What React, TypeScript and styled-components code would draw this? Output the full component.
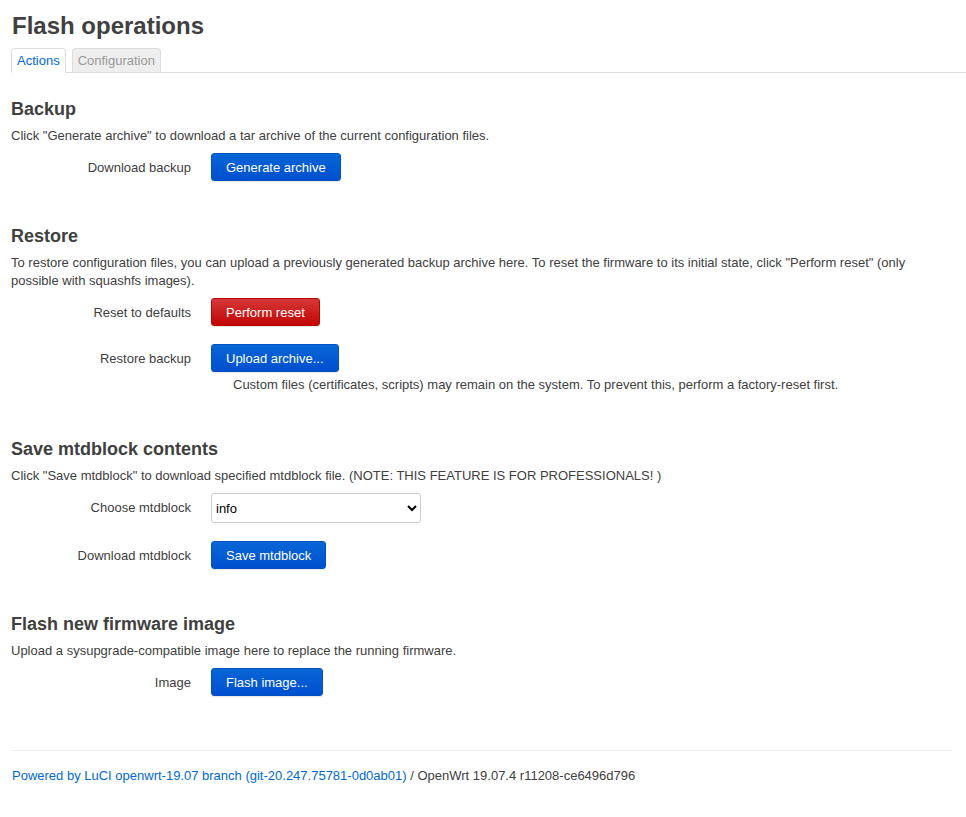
import React from "react";
import styled, { createGlobalStyle } from "styled-components";

const Global = createGlobalStyle`
  html, body { margin: 0; padding: 0; background: #fff; }
  body {
    font-family: "Liberation Sans", Arial, sans-serif;
    font-size: 13px;
    line-height: 18px;
    color: #404040;
  }
`;

const Page = styled.div`
  padding: 0 15px 0 11px;
`;

const Title = styled.h2`
  margin: 0;
  padding-top: 8px;
  font-size: 24px;
  line-height: 36px;
  font-weight: bold;
  color: #404040;
  padding-left: 1px;
`;

const Tabs = styled.ul`
  display: flex;
  list-style: none;
  margin: 4px -15px 0 0;
  padding: 0;
  border-bottom: 1px solid #ddd;
  height: 24px;
  gap: 6px;
`;

const Tab = styled.li<{ $active?: boolean }>`
  box-sizing: border-box;
  height: ${(p) => (p.$active ? "25px" : "24px")};
  padding: 0 5px;
  line-height: 24px;
  font-size: 13px;
  border: 1px solid #ddd;
  border-bottom: ${(p) => (p.$active ? "1px solid #fff" : "none")};
  border-radius: 4px 4px 0 0;
  background: ${(p) => (p.$active ? "#fff" : "#eee")};
  color: ${(p) => (p.$active ? "#0069d6" : "#999")};
`;

const Section = styled.section`
  margin-top: 25px;
  & + & { margin-top: 44px; }
`;

const SectionTitle = styled.h3`
  margin: 0;
  font-size: 18px;
  line-height: 22px;
  font-weight: bold;
  color: #404040;
`;

const Desc = styled.p`
  margin: 7px 0 0;
  font-size: 13px;
  line-height: 18px;
`;

const Rows = styled.div`
  display: flex;
  flex-direction: column;
  gap: 18px;
  margin-top: 8px;
`;

const Row = styled.div`
  display: grid;
  grid-template-columns: 180px 1fr;
  column-gap: 20px;
  align-items: start;
`;

const Label = styled.div`
  text-align: right;
  padding-top: 6px;
  font-size: 13px;
  line-height: 18px;
`;

const Field = styled.div`
  display: flex;
  flex-direction: column;
  align-items: flex-start;
`;

const Button = styled.button<{ $variant?: "action" | "reset" }>`
  box-sizing: border-box;
  height: 28px;
  padding: 0 14px;
  border-radius: 3px;
  font-family: "Liberation Sans", Arial, sans-serif;
  font-size: 13px;
  color: #fff;
  cursor: pointer;
  border: 1px solid ${(p) => (p.$variant === "reset" ? "#b00" : "#0052c4")};
  background: ${(p) =>
    p.$variant === "reset"
      ? "linear-gradient(#d43838, #c20606)"
      : "linear-gradient(#0866d6, #004fcf)"};
  box-shadow: 0 1px 1px rgba(0, 0, 0, 0.1);
`;

const Help = styled.div`
  margin-top: 4px;
  padding-left: 22px;
  font-size: 13px;
  line-height: 18px;
`;

const Select = styled.select`
  box-sizing: border-box;
  width: 210px;
  height: 30px;
  font-family: "Liberation Sans", Arial, sans-serif;
  font-size: 13px;
  color: #000;
  border: 1px solid #ccc;
  border-radius: 3px;
  background: #fff;
  padding: 0;
`;

const Footer = styled.footer`
  margin-top: 54px;
  border-top: 1px solid #eee;
  padding-top: 16px;
  padding-bottom: 30px;
  font-size: 13px;
  line-height: 18px;
  padding-left: 1px;
`;

const Link = styled.a`
  color: #0069d6;
  text-decoration: none;
`;

export default function App() {
  return (
    <>
      <Global />
      <Page>
        <Title>Flash operations</Title>
        <Tabs>
          <Tab $active>Actions</Tab>
          <Tab>Configuration</Tab>
        </Tabs>

        <Section>
          <SectionTitle>Backup</SectionTitle>
          <Desc>Click "Generate archive" to download a tar archive of the current configuration files.</Desc>
          <Rows>
            <Row>
              <Label>Download backup</Label>
              <Field>
                <Button>Generate archive</Button>
              </Field>
            </Row>
          </Rows>
        </Section>

        <Section>
          <SectionTitle>Restore</SectionTitle>
          <Desc>
            To restore configuration files, you can upload a previously generated backup archive here. To reset the firmware to its initial state, click "Perform reset" (only possible with squashfs images).
          </Desc>
          <Rows>
            <Row>
              <Label>Reset to defaults</Label>
              <Field>
                <Button $variant="reset">Perform reset</Button>
              </Field>
            </Row>
            <Row>
              <Label>Restore backup</Label>
              <Field>
                <Button>Upload archive...</Button>
                <Help>Custom files (certificates, scripts) may remain on the system. To prevent this, perform a factory-reset first.</Help>
              </Field>
            </Row>
          </Rows>
        </Section>

        <Section>
          <SectionTitle>Save mtdblock contents</SectionTitle>
          <Desc>Click "Save mtdblock" to download specified mtdblock file. (NOTE: THIS FEATURE IS FOR PROFESSIONALS! )</Desc>
          <Rows>
            <Row>
              <Label>Choose mtdblock</Label>
              <Field>
                <Select defaultValue="info">
                  <option value="info">info</option>
                </Select>
              </Field>
            </Row>
            <Row>
              <Label>Download mtdblock</Label>
              <Field>
                <Button>Save mtdblock</Button>
              </Field>
            </Row>
          </Rows>
        </Section>

        <Section>
          <SectionTitle>Flash new firmware image</SectionTitle>
          <Desc>Upload a sysupgrade-compatible image here to replace the running firmware.</Desc>
          <Rows>
            <Row>
              <Label>Image</Label>
              <Field>
                <Button>Flash image...</Button>
              </Field>
            </Row>
          </Rows>
        </Section>

        <Footer>
          <Link href="#">Powered by LuCI openwrt-19.07 branch (git-20.247.75781-0d0ab01)</Link> / OpenWrt 19.07.4 r11208-ce6496d796
        </Footer>
      </Page>
    </>
  );
}
